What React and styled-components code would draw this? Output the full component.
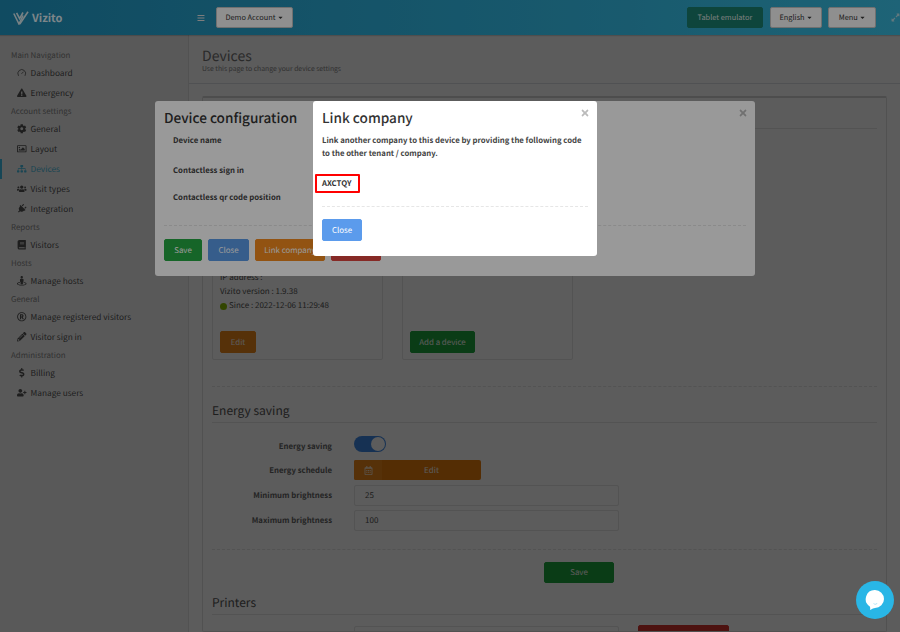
import React from "react";
import styled, { createGlobalStyle } from "styled-components";
import {
  FaExclamationTriangle, FaCog, FaRegImage, FaSitemap, FaUsers, FaPlug, FaBook,
  FaStreetView, FaRegRegistered, FaPencilAlt, FaDollarSign, FaUserPlus, FaBars,
  FaRegCalendarAlt, FaExpandAlt, FaCaretDown, FaTimes,
} from "react-icons/fa";
import { Gauge } from "lucide-react";

const FONT = `"Noto Sans CJK SC", "Noto Sans", sans-serif`;

const Global = createGlobalStyle`
  html, body { margin: 0; padding: 0; height: 632px; overflow: hidden; background: #fff; }
  * { box-sizing: border-box; }
  body { font-family: ${FONT}; font-size: 8px; color: #555; text-rendering: geometricPrecision; }
  button { text-rendering: geometricPrecision; }
`;

const Shell = styled.div`
  position: relative;
  width: 900px;
  height: 632px;
  overflow: hidden;
  background: #fff;
  display: flex;
  flex-direction: column;
`;

const Header = styled.header`
  position: relative;
  z-index: 2;
  flex: 0 0 35px;
  display: flex;
  align-items: center;
  background: linear-gradient(90deg, #1b7da2 0%, #2a97b8 70%, #32a6c6 100%);
  box-shadow: 0 1px 1px rgba(0, 0, 0, 0.15);
`;

const Brand = styled.div`
  width: 198px;
  padding-left: 13px;
  display: flex;
  align-items: center;
  gap: 3px;
  color: #d0dfe4;
  font-size: 11px;
  font-weight: 700;
`;

const MenuIcon = styled(FaBars)`
  width: 8px;
  height: 8px;
  color: #d0d0d0;
  margin-right: 10px;
`;

const TopButton = styled.button`
  font-family: ${FONT};
  font-size: 7.4px;
  height: 21px;
  border: 1px solid #bbb;
  border-radius: 2px;
  background: #eee;
  color: #333;
  padding: 0;
  white-space: nowrap;
  width: ${(p) => p.$w}px;
  margin-left: ${(p) => p.$ml || 0}px;
  display: flex;
  align-items: center;
  justify-content: center;
  gap: 1px;
`;

const TabletButton = styled(TopButton)`
  background: #187465;
  border-color: #187465;
  color: #d4d4d4;
`;

const Caret = styled(FaCaretDown)`
  width: 7px;
  height: 7px;
`;

const ExpandIcon = styled(FaExpandAlt)`
  width: 9px;
  height: 9px;
  color: #a5c8d2;
  margin-left: 15px;
`;

const Body = styled.div`
  flex: 1;
  min-height: 0;
  display: flex;
`;

const Sidebar = styled.nav`
  flex: 0 0 189px;
  background: #f9f9f9;
  border-right: 1px solid #e4e4e4;
  padding-top: 12px;
`;

const NavLabel = styled.div`
  height: 16px;
  line-height: 18px;
  padding-left: 11px;
  font-size: 7.9px;
  color: #8c8c8c;
`;

const NavItem = styled.div`
  height: 20px;
  display: flex;
  align-items: center;
  padding-left: ${(p) => (p.$active ? 15 : 17)}px;
  border-left: ${(p) => (p.$active ? "2px solid #3fc3ee" : "none")};
  font-size: 8.3px;
  color: ${(p) => (p.$active ? "#46c0e6" : "#555")};
  svg {
    width: 9.5px;
    height: 9.5px;
    margin-right: 4px;
    flex: none;
  }
`;

const PlugIcon = styled(FaPlug)`
  transform: rotate(45deg);
`;

const Main = styled.main`
  flex: 1;
  min-width: 0;
  background: #fff;
  display: flex;
  flex-direction: column;
`;

const PageHead = styled.div`
  flex: 0 0 49px;
  padding: 13.5px 0 0 13px;
  border-bottom: 1px solid #dfe3e8;
`;

const PageTitle = styled.h1`
  margin: 0;
  font-size: 14px;
  line-height: 15px;
  font-weight: 400;
  color: #777;
`;

const PageSub = styled.div`
  font-size: 6.8px;
  line-height: 8px;
  color: #888;
`;

const Panel = styled.section`
  margin: 12px 13px 0;
  flex: 1;
  border: 1px solid #e3e3e3;
  border-top: 2px solid #d5d5d5;
  border-radius: 2px;
  padding: 0 9px;
  overflow: hidden;
`;

const PanelTitle = styled.div`
  height: 31px;
  border-bottom: 1px solid #e6e6e6;
`;

const CardRow = styled.div`
  display: flex;
  gap: 19px;
  padding-top: 11px;
`;

const Card = styled.div`
  width: 171px;
  height: 220px;
  border: 1px solid #e8e8e8;
  border-radius: 2px;
  padding: 0 7px 6px;
  display: flex;
  flex-direction: column;
  justify-content: flex-end;
  align-items: flex-start;
`;

const CardLine = styled.div`
  height: 14px;
  line-height: 14px;
  font-size: 8px;
  color: #555;
  display: flex;
  align-items: center;
  gap: 2px;
`;

const StatusDot = styled.span`
  width: 7px;
  height: 7px;
  border-radius: 50%;
  background: #8cc000;
`;

const Btn = styled.button`
  font-family: ${FONT};
  font-size: 7.9px;
  height: ${(p) => p.$h || 22}px;
  width: ${(p) => p.$w}px;
  border: 1px solid ${(p) => p.$bg};
  border-radius: 2px;
  background: ${(p) => p.$bg};
  color: #fff;
  padding: 0;
  white-space: nowrap;
  overflow: hidden;
`;

const CardEdit = styled(Btn)`
  margin-top: 18px;
`;

const DashedRule = styled.hr`
  border: 0;
  border-top: 1px dashed #e6e6e6;
  margin: ${(p) => p.$m};
`;

const SectionHead = styled.h2`
  margin: ${(p) => p.$mt}px 0 0;
  height: 23px;
  line-height: 22px;
  font-size: 12px;
  font-weight: 400;
  color: #555;
  border-bottom: 1px solid #e6e6e6;
`;

const FormGrid = styled.div`
  display: grid;
  grid-template-columns: 120px 1fr;
  column-gap: 22px;
  align-items: center;
  padding-top: 13px;
  row-gap: 4px;
`;

const FormLabel = styled.div`
  text-align: right;
  font-size: 7.75px;
  font-weight: 700;
  color: #666;
`;

const Toggle = styled.div`
  width: 32px;
  height: 16px;
  border-radius: 8px;
  background: #3f8be8;
  position: relative;
  margin-bottom: 4px;
  &::after {
    content: "";
    position: absolute;
    right: 1px;
    top: 1px;
    width: 14px;
    height: 14px;
    border-radius: 50%;
    background: #fff;
  }
`;

const SplitButton = styled.div`
  width: 127px;
  height: 20px;
  margin-bottom: 1px;
  border-radius: 2px;
  overflow: hidden;
  display: flex;
  background: #ea7e0c;
  color: #fff;
  font-size: 8px;
  align-items: center;
`;

const SplitIcon = styled.div`
  width: 28px;
  height: 100%;
  background: #f08a1c;
  display: flex;
  align-items: center;
  justify-content: center;
  svg { width: 9px; height: 9px; opacity: 0.8; }
`;

const SplitText = styled.div`
  flex: 1;
  text-align: center;
`;

const Field = styled.div`
  width: 265px;
  height: 21px;
  border: 1px solid #e6e6e6;
  border-radius: 2px;
  display: flex;
  align-items: center;
  padding-left: 10px;
  font-size: 8px;
  color: #555;
`;

const SaveRow = styled.div`
  display: flex;
  padding-left: 332px;
`;

const PrinterRow = styled.div`
  display: flex;
  align-items: center;
  padding: 10px 0 0 142px;
  gap: 19px;
`;

const Backdrop = styled.div`
  position: absolute;
  inset: 0;
  z-index: ${(p) => p.$z};
  background: rgba(0, 0, 0, 0.4);
`;

const Modal = styled.div`
  position: absolute;
  z-index: ${(p) => p.$z};
  left: ${(p) => p.$x}px;
  top: 101px;
  width: ${(p) => p.$w}px;
  height: ${(p) => p.$h}px;
  background: #fff;
  border-radius: 3px;
  padding: 0 9px;
  color: #333;
`;

const ModalTitle = styled.div`
  font-size: 13.6px;
  font-weight: 500;
  line-height: 20px;
  padding-top: 6px;
  height: 30px;
  color: #333;
`;

const ModalClose = styled(FaTimes)`
  position: absolute;
  right: 7px;
  top: 7px;
  width: 10px;
  height: 10px;
  color: #bbb;
`;

const ConfigRows = styled.div`
  padding: 0 9px;
  display: flex;
  flex-direction: column;
`;

const ConfigLabel = styled.div`
  height: ${(p) => p.$h}px;
  font-size: 7.75px;
  font-weight: 700;
  line-height: 20px;
  color: #444;
`;

const ModalFoot = styled.div`
  display: flex;
  gap: 6px;
`;

const ModalText = styled.p`
  margin: 0;
  font-size: 7.75px;
  font-weight: 700;
  line-height: 13px;
  padding-top: 3px;
  color: #444;
`;

const CodeBox = styled.div`
  display: inline-block;
  margin: 14px 0 0 -7px;
  padding: 0 5px;
  width: 45px;
  height: 19px;
  border: 2px solid #f00;
  border-radius: 1px;
  line-height: 16px;
  font-size: 7.75px;
  font-weight: 700;
  color: #333;
  white-space: nowrap;
`;

const Chat = styled.div`
  position: absolute;
  z-index: 6;
  left: 856px;
  top: 581px;
  width: 38px;
  height: 38px;
  border-radius: 50%;
  background: #29b6e6;
  display: flex;
  align-items: center;
  justify-content: center;
`;

const Logo = () => (
  <svg width="16" height="14" viewBox="0 0 16 14" fill="none" stroke="#c8d8dd" strokeWidth="1.6">
    <path d="M0.8 2.5 L6 13 L10 4.5" />
    <path d="M3.6 1.8 L6.6 7.6 L10 1.5" />
    <path d="M6.8 13 L15 0.8" />
  </svg>
);

const ChatGlyph = () => (
  <svg width="20" height="22" viewBox="0 0 20 22">
    <path d="M10 1a9 9 0 0 1 0 18c-1.3 0-2.6 .8-5 2 .3-1.400 .3-2.600 -.2-3.500A9 9 0 0 1 10 1z" fill="#fff" />
    <path d="M8 14.500c1.200 .5 2.800 .5 4.500 0-.5 1.100-3.700 1.100-4.500 0z" fill="#29b6e6" />
  </svg>
);

const sections = [
  ["Main Navigation", [["Dashboard", <Gauge strokeWidth={2} />], ["Emergency", <FaExclamationTriangle />]]],
  ["Account settings", [["General", <FaCog />], ["Layout", <FaRegImage />], ["Devices", <FaSitemap />, true], ["Visit types", <FaUsers />], ["Integration", <PlugIcon />]]],
  ["Reports", [["Visitors", <FaBook />]]],
  ["Hosts", [["Manage hosts", <FaStreetView />]]],
  ["General", [["Manage registered visitors", <FaRegRegistered />], ["Visitor sign in", <FaPencilAlt />]]],
  ["Administration", [["Billing", <FaDollarSign />], ["Manage users", <FaUserPlus />]]],
];

export default function App() {
  return (
    <>
      <Global />
      <Shell>
        <Header>
          <Brand>
            <Logo />
            Vizito
          </Brand>
          <MenuIcon />
          <TopButton $w={78} $ml={1}>Demo Account<Caret /></TopButton>
          <TabletButton $w={76} $ml={394}>Tablet emulator</TabletButton>
          <TopButton $w={53} $ml={7}>English<Caret /></TopButton>
          <TopButton $w={48} $ml={6}>Menu<Caret /></TopButton>
          <ExpandIcon />
        </Header>
        <Body>
          <Sidebar>
            {sections.map(([label, items]) => (
              <React.Fragment key={label + items.length}>
                <NavLabel>{label}</NavLabel>
                {items.map(([text, icon, active]) => (
                  <NavItem key={text} $active={active}>{icon}{text}</NavItem>
                ))}
              </React.Fragment>
            ))}
          </Sidebar>
          <Main>
            <PageHead>
              <PageTitle>Devices</PageTitle>
              <PageSub>Use this page to change your device settings</PageSub>
            </PageHead>
            <Panel>
              <PanelTitle />
              <CardRow>
                <Card>
                  <CardLine>IP address :</CardLine>
                  <CardLine>Vizito version : 1.9.38</CardLine>
                  <CardLine><StatusDot />Since : 2022-12-06 11:29:48</CardLine>
                  <CardEdit $bg="#f08a1c" $w={36} $h={22}>Edit</CardEdit>
                </Card>
                <Card>
                  <CardEdit $bg="#1fa83e" $w={65} $h={22}>Add a device</CardEdit>
                </Card>
              </CardRow>
              <DashedRule $m="26px 0 0" />
              <SectionHead $mt={13}>Energy saving</SectionHead>
              <FormGrid>
                <FormLabel>Energy saving</FormLabel>
                <Toggle />
                <FormLabel>Energy schedule</FormLabel>
                <SplitButton>
                  <SplitIcon><FaRegCalendarAlt /></SplitIcon>
                  <SplitText>Edit</SplitText>
                </SplitButton>
                <FormLabel>Minimum brightness</FormLabel>
                <Field>25</Field>
                <FormLabel>Maximum brightness</FormLabel>
                <Field>100</Field>
              </FormGrid>
              <DashedRule $m="18px 0 12px" />
              <SaveRow><Btn $bg="#1fa83e" $w={70} $h={21}>Save</Btn></SaveRow>
              <SectionHead $mt={9}>Printers</SectionHead>
              <PrinterRow>
                <Field />
                <Btn $bg="#d8342f" $w={91} $h={22}>Delete</Btn>
              </PrinterRow>
            </Panel>
          </Main>
        </Body>

        <Backdrop $z={1} />

        <Modal $z={3} $x={155} $w={600} $h={175}>
          <ModalTitle>Device configuration</ModalTitle>
          <ModalClose />
          <ConfigRows>
            <ConfigLabel $h={30}>Device name</ConfigLabel>
            <ConfigLabel $h={27}>Contactless sign in</ConfigLabel>
            <ConfigLabel $h={37}>Contactless qr code position</ConfigLabel>
          </ConfigRows>
          <DashedRule $m="0 0 13px" />
          <ModalFoot>
            <Btn $bg="#26a943" $w={38}>Save</Btn>
            <Btn $bg="#5b9be8" $w={41}>Close</Btn>
            <Btn $bg="#f38b1f" $w={70}>Link company</Btn>
            <Btn $bg="#e04640" $w={50}>Delete</Btn>
          </ModalFoot>
        </Modal>

        <Backdrop $z={4} />

        <Modal $z={5} $x={313} $w={284} $h={155}>
          <ModalTitle>Link company</ModalTitle>
          <ModalClose />
          <ModalText>Link another company to this device by providing the following code<br />to the other tenant / company.</ModalText>
          <div><CodeBox>AXCTQY</CodeBox></div>
          <DashedRule $m="13px 0 12px" />
          <Btn $bg="#5b9bec" $w={40}>Close</Btn>
        </Modal>

        <Chat><ChatGlyph /></Chat>
      </Shell>
    </>
  );
}
